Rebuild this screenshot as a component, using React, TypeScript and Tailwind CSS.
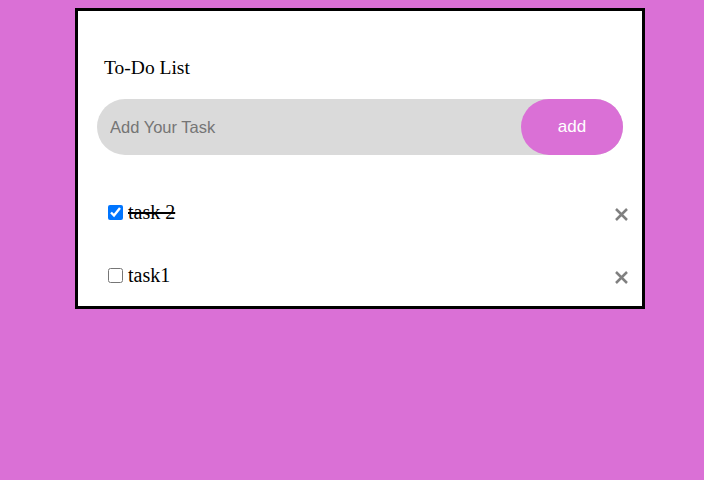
import { useState } from 'react'

type Task = { id: number; text: string; done: boolean }

function CloseIcon() {
  return (
    <svg width="15" height="15" viewBox="0 0 15 15" className="shrink-0">
      <path d="M2 2 L13 13 M13 2 L2 13" stroke="#808080" strokeWidth="2.5" strokeLinecap="butt" />
    </svg>
  )
}

export default function App() {
  const [tasks, setTasks] = useState<Task[]>([
    { id: 2, text: 'task 2', done: true },
    { id: 1, text: 'task1', done: false },
  ])

  const toggle = (id: number) =>
    setTasks((t) => t.map((x) => (x.id === id ? { ...x, done: !x.done } : x)))

  return (
    <div className="min-h-[480px] w-full bg-[#da70d6] pt-[8px] pl-[75px]">
      <div className="w-[570px] h-[301px] bg-white border-[3px] border-black px-[19px] pt-[45px]">
        <h2 className="pl-[7px] text-[19.5px] leading-[24px] text-black font-['Liberation_Serif',serif]">
          To-Do List
        </h2>
        <div className="mt-[19px] flex h-[56px] items-center rounded-full bg-[#dadada]">
          <input
            className="flex-1 bg-transparent pl-[13px] text-[16.5px] text-black outline-none placeholder:text-[#757575] font-['Liberation_Sans',sans-serif]"
            placeholder="Add Your Task"
          />
          <button className="h-[56px] w-[102px] rounded-full bg-[#da70d6] text-[17px] text-white font-['Liberation_Sans',sans-serif]">
            add
          </button>
        </div>
        <ul className="mt-[39px] pl-[7px] -mr-[6px]">
          {tasks.map((t) => (
            <li key={t.id} className="flex h-[63px] items-start justify-between">
              <label className="flex items-center pt-[6px]">
                <input
                  type="checkbox"
                  checked={t.done}
                  onChange={() => toggle(t.id)}
                  className="ml-[4px] mr-[5px] h-[15px] w-[15px]"
                />
                <span
                  className={`text-[20px] leading-[24px] text-black font-['Liberation_Serif',serif] ${t.done ? 'line-through' : ''}`}
                >
                  {t.text}
                </span>
              </label>
              <button className="mt-[13px]" aria-label="remove">
                <CloseIcon />
              </button>
            </li>
          ))}
        </ul>
      </div>
    </div>
  )
}
